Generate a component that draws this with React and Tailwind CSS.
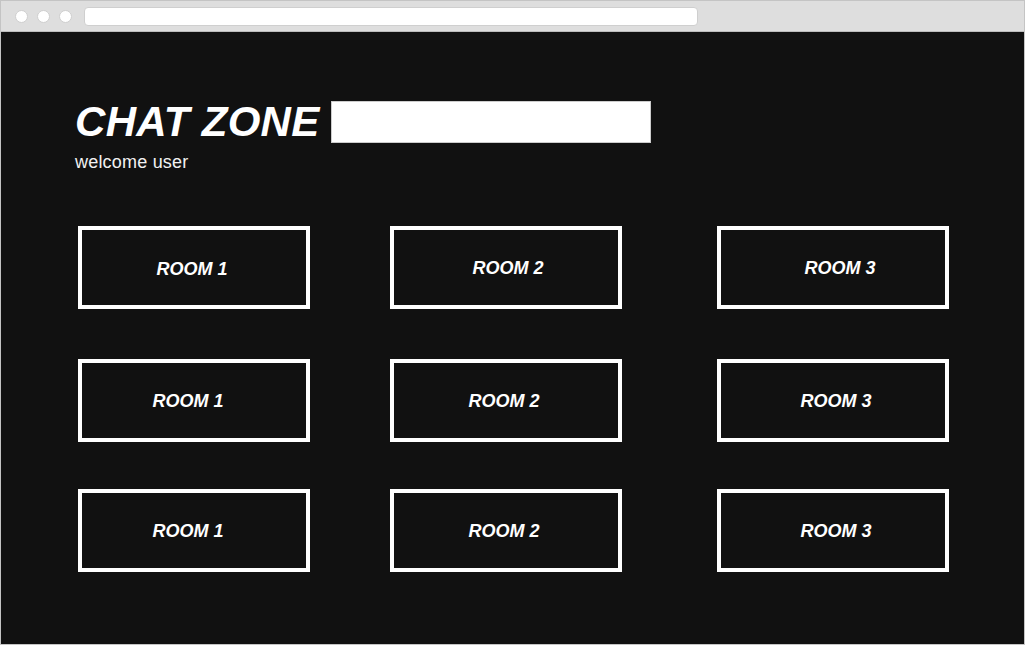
import React from "react";

const rooms = [
  { label: "ROOM 1", pad: "pr-[4px] pt-[3px]" },
  { label: "ROOM 2", pad: "pl-[4px] pt-[2px]" },
  { label: "ROOM 3", pad: "pl-[14px] pt-[2px]" },
  { label: "ROOM 1", pad: "pr-[12px] pt-[2px]" },
  { label: "ROOM 2", pad: "pr-[4px] pt-[2px]" },
  { label: "ROOM 3", pad: "pl-[6px] pt-[2px]" },
  { label: "ROOM 1", pad: "pr-[12px] pt-[2px]" },
  { label: "ROOM 2", pad: "pr-[4px] pt-[2px]" },
  { label: "ROOM 3", pad: "pl-[6px] pt-[2px]" },
];

export default function App() {
  return (
    <div className="w-[1025px] h-[645px] flex flex-col border border-[#c4c4c4] bg-[#111111] font-['Liberation_Sans',Arial,sans-serif] overflow-hidden">
      {/* browser chrome */}
      <div className="h-[31px] shrink-0 bg-[#dedede] border-b border-[#bdbdbd] flex items-center pl-[14px] gap-[9px]">
        <span className="w-[13px] h-[13px] rounded-full bg-white border border-[#cfcfcf]" />
        <span className="w-[13px] h-[13px] rounded-full bg-white border border-[#cfcfcf]" />
        <span className="w-[13px] h-[13px] rounded-full bg-white border border-[#cfcfcf]" />
        <div className="ml-[3px] w-[614px] h-[19px] bg-white rounded-[4px] border border-[#cfcfcf]" />
      </div>

      <div className="flex-1 pl-[74px] pt-[69px]">
        <div className="flex items-center gap-[11px]">
          <h1 className="text-[42px] leading-[42px] font-bold italic tracking-[0.3px] text-white">CHAT ZONE</h1>
          <input className="w-[320px] h-[42px] bg-white border border-[#cccccc] outline-none" />
        </div>
        <p className="mt-[6px] text-[18px] leading-[27px] tracking-[0.2px] text-[#f2f2f2]">welcome user</p>

        <div className="mt-[50px] ml-[3px] grid grid-cols-[312px_327px_232px] grid-rows-[133px_130px_83px]">
          {rooms.map((r, i) => (
            <div key={i} className={`w-[232px] h-[83px] border-4 border-white flex items-center justify-center ${r.pad}`}>
              <span className="text-[18px] font-bold italic text-white">{r.label}</span>
            </div>
          ))}
        </div>
      </div>
    </div>
  );
}
